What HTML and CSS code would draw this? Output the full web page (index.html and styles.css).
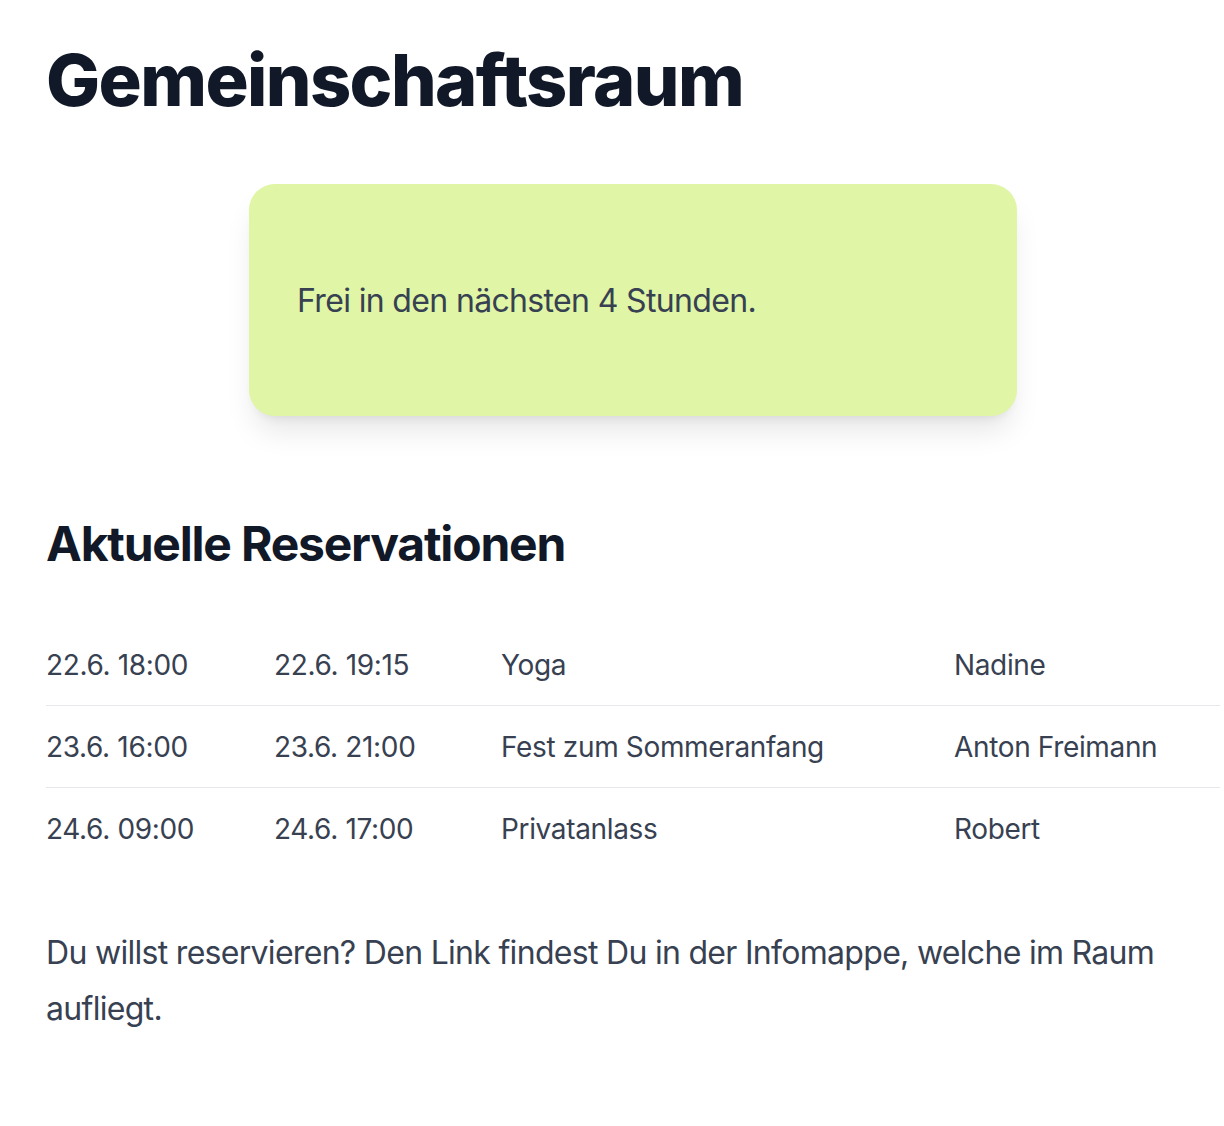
FILE: index.html
```html
<!DOCTYPE html>
<html lang="de">
<head>
<meta charset="utf-8">
<title>Gemeinschaftsraum</title>
<link rel="stylesheet" href="styles.css">
</head>
<body>
<main class="prose">
  <h1 class="title">Gemeinschaftsraum</h1>
  <div class="status-card">
    <p>Frei in den nächsten 4 Stunden.</p>
  </div>
  <h2 class="subtitle">Aktuelle Reservationen</h2>
  <table class="reservations">
    <colgroup>
      <col class="col-start">
      <col class="col-end">
      <col class="col-title">
      <col class="col-name">
    </colgroup>
    <tbody>
      <tr><td>22.6. 18:00</td><td>22.6. 19:15</td><td>Yoga</td><td>Nadine</td></tr>
      <tr><td>23.6. 16:00</td><td>23.6. 21:00</td><td>Fest zum Sommeranfang</td><td>Anton Freimann</td></tr>
      <tr><td>24.6. 09:00</td><td>24.6. 17:00</td><td>Privatanlass</td><td>Robert</td></tr>
    </tbody>
  </table>
  <p class="note">Du willst reservieren? Den Link findest Du in der Infomappe, welche im Raum aufliegt.</p>
</main>
</body>
</html>
```

FILE: styles.css
```css
html, body {
  margin: 0;
  padding: 0;
  background: #ffffff;
}

body {
  font-family: Inter, "Noto Sans", "Liberation Sans", sans-serif;
}

.prose {
  box-sizing: border-box;
  width: 1220px;
  padding: 40px 0 40px 46px;
  color: #374151;
  font-size: 32px;
  line-height: 1.75;
  letter-spacing: -0.7px;
}

.title {
  margin: 0 0 64px;
  font-size: 72px;
  line-height: 80px;
  font-weight: 800;
  color: #111827;
  letter-spacing: -1.6px;
}

.status-card {
  width: 768px;
  margin: 0 auto;
  box-sizing: border-box;
  padding: 48px;
  background: #e0f5a6;
  border-radius: 26px;
  box-shadow: 0 20px 30px -6px rgba(0, 0, 0, 0.1), 0 8px 12px -8px rgba(0, 0, 0, 0.1);
}

.status-card p {
  margin: 41px 0 39px;
  letter-spacing: -0.65px;
}

.subtitle {
  margin: 96px 0 48px;
  font-size: 48px;
  line-height: 64px;
  font-weight: 700;
  color: #111827;
  letter-spacing: -1.2px;
}

.reservations {
  width: 100%;
  table-layout: fixed;
  border-collapse: collapse;
  font-size: 28px;
  line-height: 48px;
  letter-spacing: -0.35px;
  margin: 0 0 56px;
}

.col-start { width: 212px; }
.col-end { width: 227px; }
.col-title { width: 453px; }
.col-name { width: auto; }

.reservations td {
  padding: 17px 16px 16px;
  white-space: nowrap;
}

.reservations td:first-child {
  padding-left: 0;
}

.reservations td:last-child {
  padding-right: 0;
}

.reservations tr + tr {
  border-top: 1px solid #e5e7eb;
}

.note {
  margin: 0;
}
```
